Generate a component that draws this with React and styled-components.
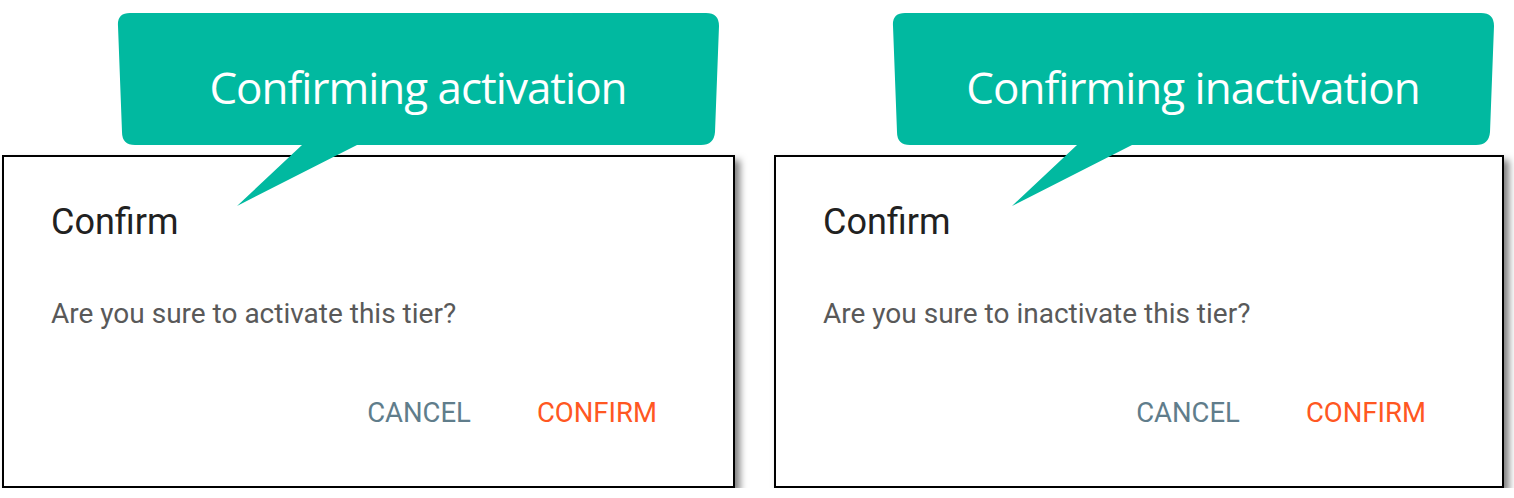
import React from "react";
import styled, { createGlobalStyle } from "styled-components";

const GlobalStyle = createGlobalStyle`
  body {
    margin: 0;
    background: #ffffff;
    font-family: Roboto, "Liberation Sans", sans-serif;
  }
`;

const Page = styled.div`
  display: flex;
  align-items: flex-start;
  gap: 39px;
  padding: 13px 0 0 2px;
`;

const Panel = styled.div`
  display: flex;
  flex-direction: column;
  gap: 10px;
  width: ${({ $width }) => $width}px;
`;

const Bubble = styled.div`
  position: relative;
  z-index: 1;
  width: 602px;
  height: 132px;
  margin-left: ${({ $offset }) => $offset}px;
  display: flex;
  justify-content: center;
  padding-top: 49px;
  box-sizing: border-box;
`;

const BubbleShape = styled.svg`
  position: absolute;
  top: 0;
  left: 0;
  overflow: visible;
  z-index: -1;
`;

const BubbleText = styled.span`
  font-family: "Open Sans", "Noto Sans", sans-serif;
  font-size: 44px;
  line-height: 50px;
  color: #ffffff;
  letter-spacing: -1px;
  white-space: nowrap;
`;

const Dialog = styled.div`
  box-sizing: border-box;
  height: 333px;
  border: 2px solid #000000;
  background: #ffffff;
  box-shadow: 5px 5px 7px rgba(0, 0, 0, 0.5);
  padding: 49px 76px 0 47px;
  display: flex;
  flex-direction: column;
`;

const Title = styled.h2`
  margin: 0;
  font-size: 36px;
  line-height: 33px;
  font-weight: 400;
  color: #212121;
`;

const Message = styled.p`
  margin: 60px 0 0;
  font-size: 28px;
  line-height: 30px;
  color: #595959;
`;

const Actions = styled.div`
  display: flex;
  justify-content: flex-end;
  gap: 66px;
  margin-top: 69px;
`;

const ActionButton = styled.button`
  border: none;
  background: none;
  padding: 0;
  font-family: Roboto, "Liberation Sans", sans-serif;
  font-size: 27.5px;
  line-height: 30px;
  color: ${({ $primary }) => ($primary ? "#ff5722" : "#607d8b")};
  cursor: pointer;
`;

const shapePath =
  "M 13 0 L 589 0 Q 602 0 602 13 L 598 119 Q 597 132 584 132 L 240 132 L 120 193 L 185 132 L 18 132 Q 5 132 5 119 L 1 13 Q 0 0 13 0 Z";

const panels = [
    { width: 733, offset: 115, label: "Confirming activation", verb: "activate" },
    { width: 730, offset: 118, label: "Confirming inactivation", verb: "inactivate" },
];

const ConfirmPanel = ({ width, offset, label, verb }) => {
    return (
        <Panel $width={width}>
            <Bubble $offset={offset}>
                <BubbleShape width="602" height="132" viewBox="0 0 602 132">
                    <path d={shapePath} fill="#01b9a0" />
                </BubbleShape>
                <BubbleText>{label}</BubbleText>
            </Bubble>
            <Dialog>
                <Title>Confirm</Title>
                <Message>Are you sure to {verb} this tier?</Message>
                <Actions>
                    <ActionButton>CANCEL</ActionButton>
                    <ActionButton $primary>CONFIRM</ActionButton>
                </Actions>
            </Dialog>
        </Panel>
    );
};

const App = () => {
    return (
        <>
            <GlobalStyle />
            <Page>
                {panels.map((p) => (
                    <ConfirmPanel key={p.label} {...p} />
                ))}
            </Page>
        </>
    );
};

export default App;
